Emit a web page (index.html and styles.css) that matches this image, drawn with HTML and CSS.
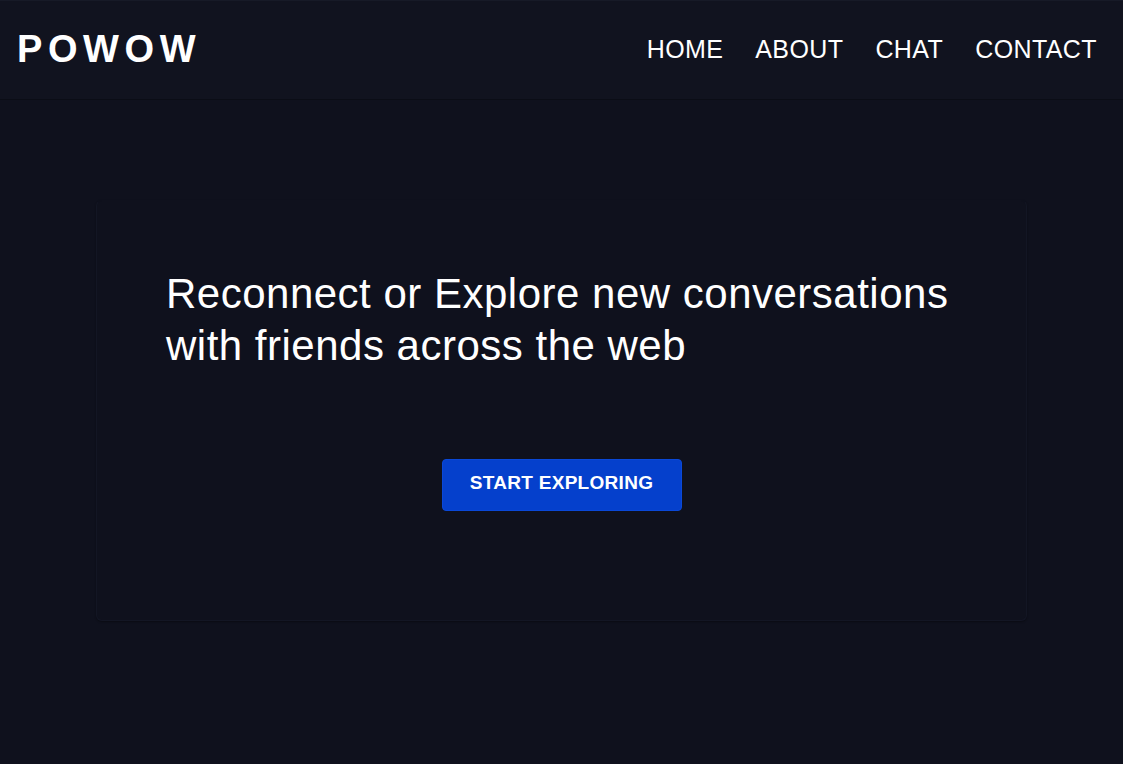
FILE: index.html
```html
<!DOCTYPE html>
<html lang="en">
<head>
<meta charset="utf-8">
<title>Powow</title>
<link rel="stylesheet" href="styles.css">
</head>
<body>
<header class="header">
  <div class="logo">POWOW</div>
  <nav class="nav">
    <a href="#">HOME</a>
    <a href="#">ABOUT</a>
    <a href="#">CHAT</a>
    <a href="#">CONTACT</a>
  </nav>
</header>
<main class="main">
  <section class="card">
    <h1 class="title">Reconnect or Explore new conversations with friends across the web</h1>
    <div class="actions">
      <button class="btn">START EXPLORING</button>
    </div>
  </section>
</main>
</body>
</html>
```
FILE: styles.css
```css
* { box-sizing: border-box; }
html, body { margin: 0; padding: 0; }
body {
  background: #0f111d;
  color: #fff;
  font-family: "Liberation Sans", Arial, sans-serif;
  height: 764px;
  overflow: hidden;
}
.header {
  height: 100px;
  background: #11131f;
  border-top: 1px solid #171a27;
  border-bottom: 1px solid #0b0d16;
  display: flex;
  align-items: center;
  justify-content: space-between;
  padding: 0 26px 2px 17px;
}
.logo {
  font-size: 38px;
  font-weight: bold;
  letter-spacing: 5.6px;
}
.nav {
  display: flex;
  gap: 32px;
}
.nav a {
  color: #fff;
  text-decoration: none;
  font-size: 25px;
  letter-spacing: 0.4px;
}
.main {
  display: flex;
  justify-content: center;
  padding-top: 100px;
}
.card {
  width: 931px;
  height: 421px;
  border-radius: 6px;
  border: 1px solid #131624;
  border-top-color: #0f111d;
  box-shadow: 0 1px 2px rgba(0,0,0,0.35);
  padding: 67px 60px 0 69px;
}
.title {
  margin: 0;
  font-weight: normal;
  font-size: 42px;
  line-height: 52px;
  letter-spacing: 0.5px;
}
.actions {
  display: flex;
  justify-content: center;
  margin-top: 87px;
  margin-left: -9px;
}
.btn {
  width: 240px;
  height: 52px;
  background: #0540cc;
  border: 1px solid #0a48d8;
  border-radius: 4px;
  color: #fff;
  font-family: "Liberation Sans", Arial, sans-serif;
  font-weight: bold;
  font-size: 19px;
  letter-spacing: 0.3px;
  padding: 0 0 4px;
}
```
